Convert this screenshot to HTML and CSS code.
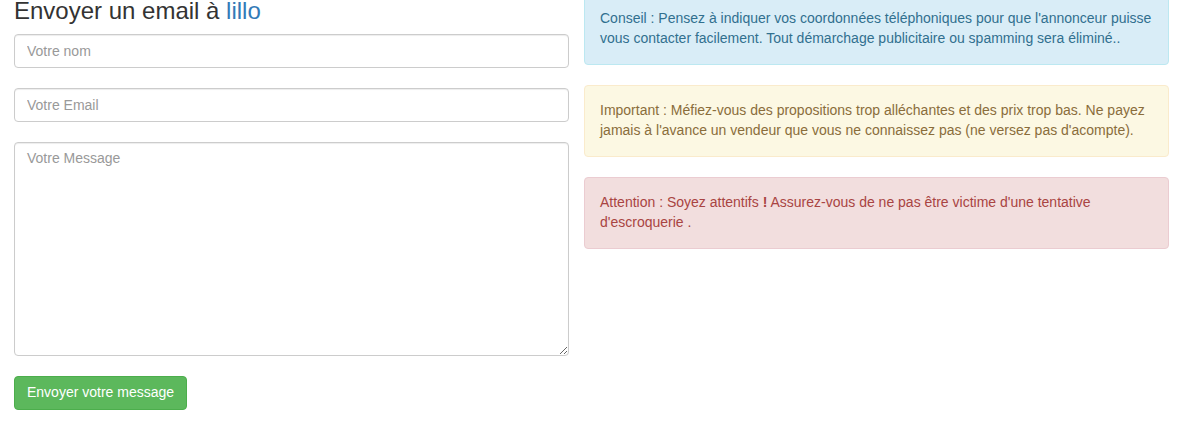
FILE: index.html
```html
<!DOCTYPE html>
<html lang="fr">
<head>
<meta charset="utf-8">
<title>Envoyer un email</title>
<link rel="stylesheet" href="styles.css">
</head>
<body>
<div class="page">
  <div class="col-form">
    <h3 class="title">Envoyer un email à <a href="#" class="link">lillo</a></h3>
    <form class="form">
      <div class="group"><input class="control" type="text" placeholder="Votre nom"></div>
      <div class="group"><input class="control" type="email" placeholder="Votre Email"></div>
      <div class="group"><textarea class="control area" placeholder="Votre Message"></textarea></div>
      <button type="button" class="btn">Envoyer votre message</button>
    </form>
  </div>
  <div class="col-alerts">
    <div class="alert alert-info">Conseil : Pensez à indiquer vos coordonnées téléphoniques pour que l'annonceur puisse vous contacter facilement. Tout démarchage publicitaire ou spamming sera éliminé..</div>
    <div class="alert alert-warning">Important : Méfiez-vous des propositions trop alléchantes et des prix trop bas. Ne payez jamais à l'avance un vendeur que vous ne connaissez pas (ne versez pas d'acompte).</div>
    <div class="alert alert-danger">Attention : Soyez attentifs <b>!</b> Assurez-vous de ne pas être victime d'une tentative d'escroquerie .</div>
  </div>
</div>
</body>
</html>
```
FILE: styles.css
```css
* { box-sizing: border-box; }
html, body { margin: 0; padding: 0; background: #fff; }
body {
  font-family: "Liberation Sans", Arial, Helvetica, sans-serif;
  font-size: 14px;
  line-height: 1.42857;
  color: #333;
}
.page {
  display: grid;
  grid-template-columns: 555px 585px;
  column-gap: 15px;
  align-items: start;
  padding-left: 14px;
  margin-top: -7px;
}
.title {
  margin: 5px 0 10px;
  font-size: 24px;
  font-weight: 500;
  line-height: 1.1;
  color: #333;
}
.link { color: #337ab7; text-decoration: none; }
.form { margin: 0; }
.group { margin-bottom: 20px; }
.control {
  display: block;
  width: 100%;
  height: 34px;
  padding: 6px 12px;
  font-family: inherit;
  font-size: 14px;
  line-height: 1.42857;
  color: #555;
  background: #fff;
  border: 1px solid #ccc;
  border-radius: 4px;
  box-shadow: inset 0 1px 1px rgba(0,0,0,.075);
  margin: 0;
}
.control::placeholder { color: #999; opacity: 1; }
.area { height: 214px; resize: vertical; }
.btn {
  display: inline-block;
  height: 34px;
  padding: 6px 12px;
  font-family: inherit;
  font-size: 14px;
  line-height: 1.42857;
  color: #fff;
  background: #5cb85c;
  border: 1px solid #4cae4c;
  border-radius: 4px;
  cursor: pointer;
}
.alert {
  padding: 15px;
  margin-bottom: 20px;
  border: 1px solid transparent;
  border-radius: 4px;
}
.alert b { font-weight: 700; }
.alert-info { background: #d9edf7; border-color: #bce8f1; color: #31708f; }
.alert-warning { background: #fcf8e3; border-color: #faebcc; color: #8a6d3b; }
.alert-danger { background: #f2dede; border-color: #ebccd1; color: #a94442; }
```
